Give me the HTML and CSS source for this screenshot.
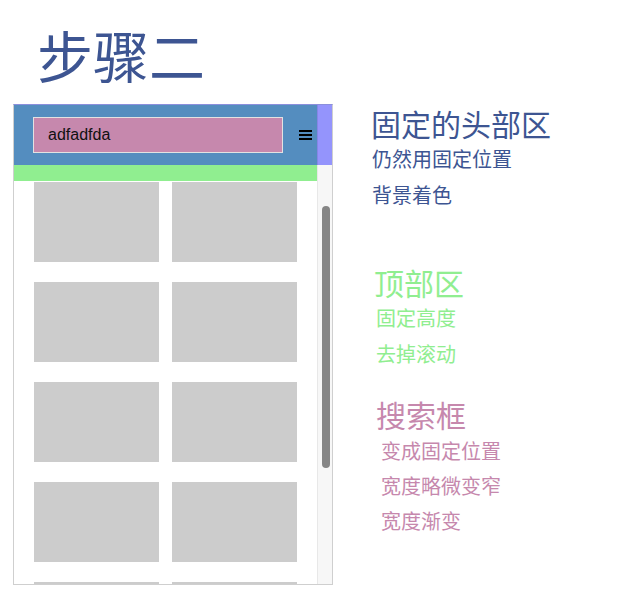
FILE: index.html
```html
<!DOCTYPE html>
<html lang="zh-CN">
<head>
    <meta charset="UTF-8">
    <meta name="viewport" content="width=device-width, initial-scale=1.0">
    <title>步骤二</title>
    <link rel="stylesheet" href="styles.css">
</head>
<body>
    <h1 class="title">步骤二</h1>
    <div class="demo">
        <div class="phone">
            <div class="head">
                <div class="bar">
                    <div class="search">adfadfda</div>
                    <div class="menu"><span></span><span></span><span></span></div>
                </div>
                <div class="strip"></div>
            </div>
            <div class="body">
                <div class="main">
                    <div class="top"></div>
                    <div class="grid">
                        <div class="box"></div><div class="box"></div>
                        <div class="box"></div><div class="box"></div>
                        <div class="box"></div><div class="box"></div>
                        <div class="box"></div><div class="box"></div>
                        <div class="box"></div><div class="box"></div>
                    </div>
                </div>
                <div class="track"><div class="thumb"></div></div>
            </div>
        </div>

        <div class="notes">
            <div class="note note-head">
                <h2>固定的头部区</h2>
                <p>仍然用固定位置</p>
                <p>背景着色</p>
            </div>
            <div class="note note-top">
                <h2>顶部区</h2>
                <p>固定高度</p>
                <p>去掉滚动</p>
            </div>
            <div class="note note-search">
                <h2>搜索框</h2>
                <p>变成固定位置</p>
                <p>宽度略微变窄</p>
                <p>宽度渐变</p>
            </div>
        </div>
    </div>
</body>
</html>
```

FILE: styles.css
```css
body {
    margin: 0;
    background-color: #fff;
    font-family: "Noto Sans CJK SC", "Liberation Sans", sans-serif;
}
.title {
    margin: 26px 0 22px 0;
    padding-left: 37px;
    font-size: 56px;
    line-height: 56px;
    font-weight: normal;
    color: #3d5592;
}
.demo {
    display: flex;
    padding-left: 13px;
}
.phone {
    width: 318px;
    height: 479px;
    border: 1px solid #cfcfcf;
    border-top-color: #8b8fdc;
    display: flex;
    flex-direction: column;
    overflow: hidden;
}
.head {
    display: flex;
    height: 60px;
    flex-shrink: 0;
}
.bar {
    flex: 1;
    display: flex;
    align-items: center;
    padding-left: 19px;
    background-color: #548dbf;
}
.search {
    width: 234px;
    height: 34px;
    line-height: 34px;
    padding-left: 14px;
    border: 1px solid #e2e2e2;
    background-color: #c688ad;
    font-family: "Liberation Sans", Arial, sans-serif;
    font-size: 16px;
    color: #111;
}
.menu {
    display: flex;
    flex-direction: column;
    gap: 2px;
    margin-left: 16px;
    width: 13px;
}
.menu span {
    height: 2px;
    background-color: #000;
}
.strip {
    width: 15px;
    background-color: #9494fc;
    border-left: 1px solid #8585e6;
    box-sizing: border-box;
}
.body {
    display: flex;
    flex: 1;
    min-height: 0;
}
.main {
    flex: 1;
    overflow: hidden;
}
.top {
    height: 16px;
    background-color: #90ee90;
}
.grid {
    display: grid;
    grid-template-columns: 125px 125px;
    grid-auto-rows: 80px;
    column-gap: 13px;
    row-gap: 20px;
    padding: 1px 20px 0 20px;
}
.box {
    background-color: #cccccc;
}
.track {
    width: 15px;
    box-sizing: border-box;
    padding: 41px 3px 0 4px;
    background-color: #f7f7f7;
    border-left: 1px solid #e8e8e8;
}
.thumb {
    width: 8px;
    height: 262px;
    border-radius: 4px;
    background-color: #868686;
}
.notes {
    padding-left: 38px;
    padding-top: 1px;
}
.note h2 {
    margin: 0;
    font-size: 30px;
    line-height: 36px;
    font-weight: normal;
}
.note p {
    margin: 0;
    font-size: 20px;
    line-height: 36px;
}
.note-head {
    color: #3d5592;
}
.note-head p {
    padding-left: 1px;
}
.note-top {
    margin-top: 51px;
    margin-left: 3px;
    color: #90ee90;
}
.note-top p {
    padding-left: 2px;
}
.note-search {
    margin-top: 23px;
    margin-left: 5px;
    color: #c688ad;
}
.note-search h2 {
    line-height: 38px;
}
.note-search p {
    line-height: 35px;
    padding-left: 5px;
}
```
